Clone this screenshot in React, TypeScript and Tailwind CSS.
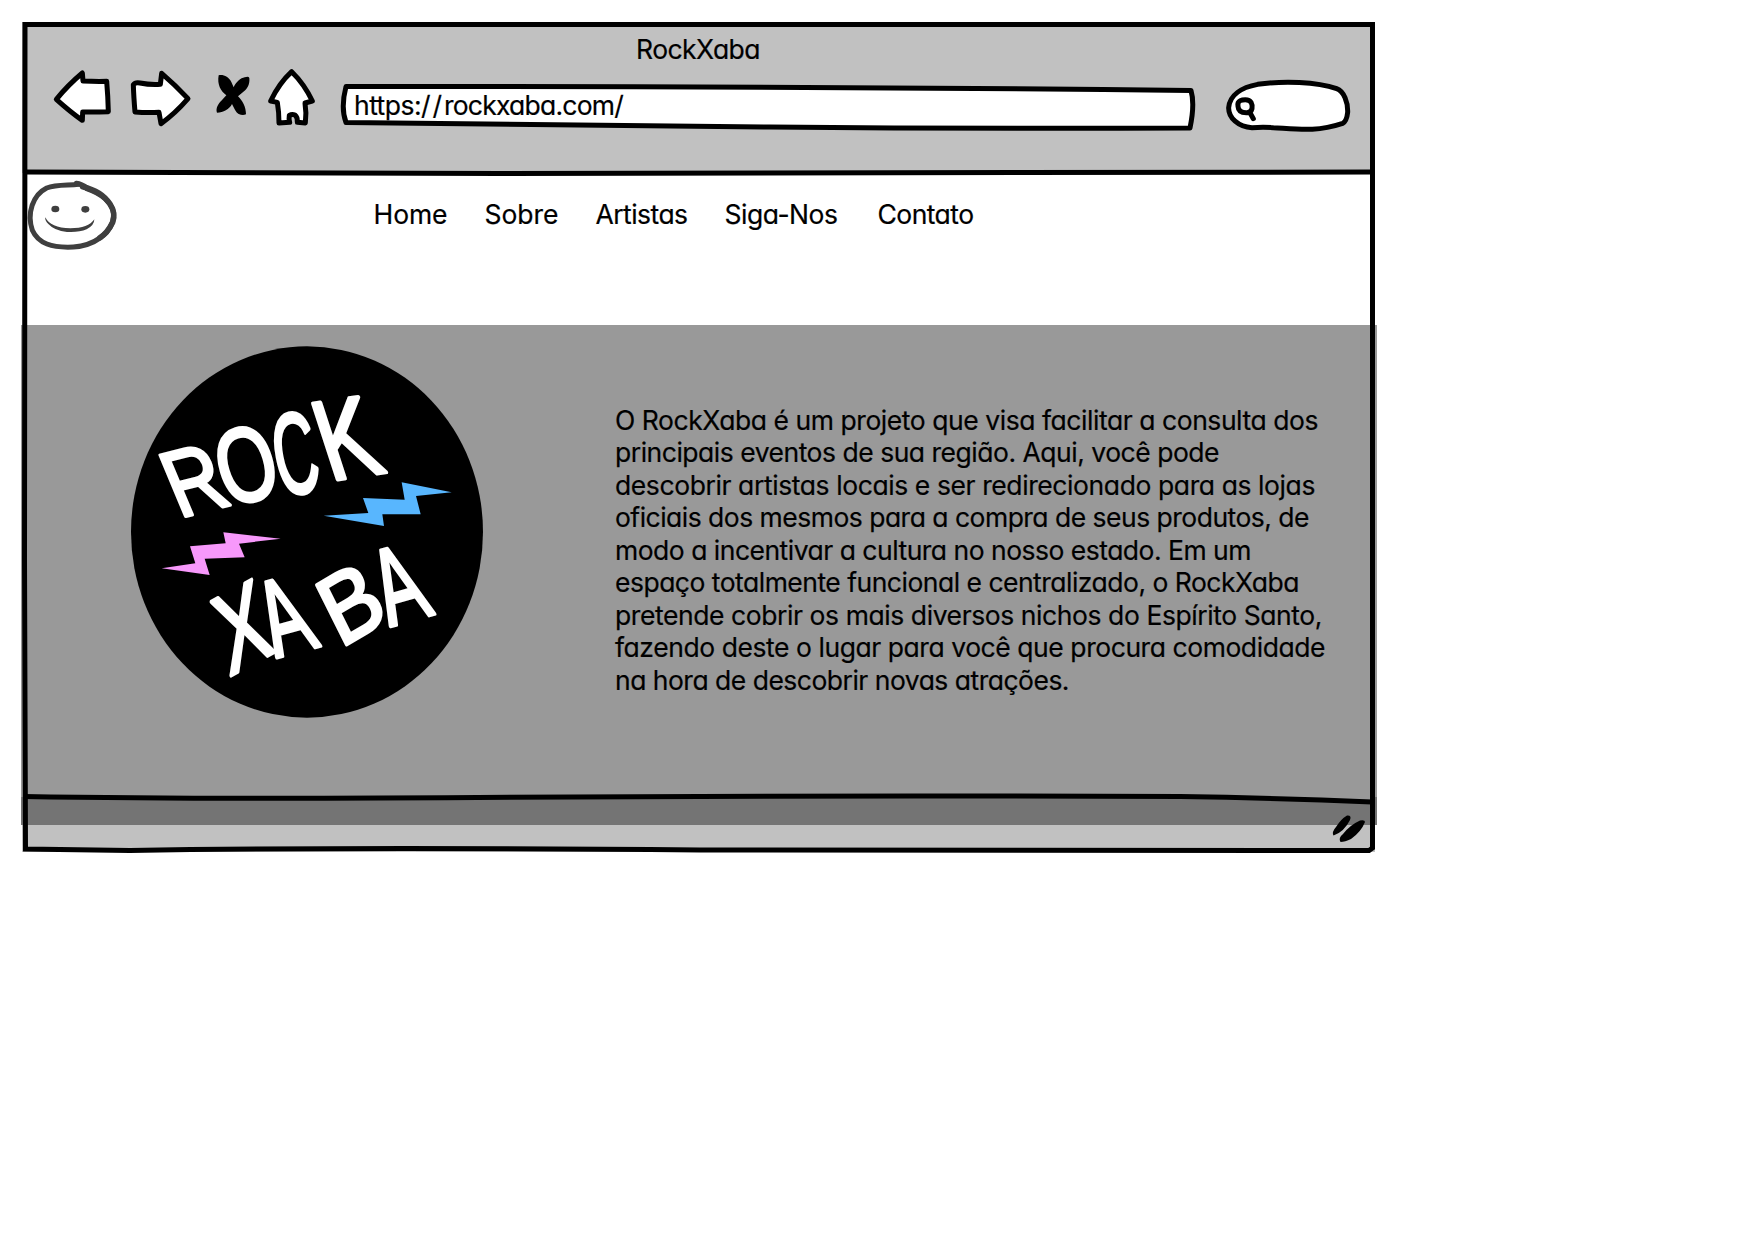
import { useLayoutEffect, useRef, useState } from 'react';

type Point = [number, number];

/* One line of text whose tracking is adjusted so that it fills `width` pixels. */
function FitText({ text, width }: { text: string; width: number }) {
  const ref = useRef<HTMLSpanElement>(null);
  const [spacing, setSpacing] = useState(0);
  useLayoutEffect(() => {
    const el = ref.current;
    if (!el) return;
    el.style.letterSpacing = '0px';
    setSpacing((width - el.getBoundingClientRect().width) / text.length || 0.001);
  }, [text, width]);
  return (
    <span ref={ref} className="inline-block whitespace-pre" style={{ letterSpacing: `${spacing}px` }}>
      {text}
    </span>
  );
}

const LINKS = [
  { label: 'Home', width: 74, gap: 'mr-[37px]' },
  { label: 'Sobre', width: 74, gap: 'mr-[37px]' },
  { label: 'Artistas', width: 92, gap: 'mr-[37px]' },
  { label: 'Siga-Nos', width: 113, gap: 'mr-[40px]' },
  { label: 'Contato', width: 96, gap: '' },
];

const ABOUT = [
  { text: 'O RockXaba é um projeto que visa facilitar a consulta dos', width: 703 },
  { text: 'principais eventos de sua região. Aqui, você pode', width: 604 },
  { text: 'descobrir artistas locais e ser redirecionado para as lojas', width: 700 },
  { text: 'oficiais dos mesmos para a compra de seus produtos, de', width: 694 },
  { text: 'modo a incentivar a cultura no nosso estado. Em um', width: 636 },
  { text: 'espaço totalmente funcional e centralizado, o RockXaba', width: 684 },
  { text: 'pretende cobrir os mais diversos nichos do Espírito Santo,', width: 707 },
  { text: 'fazendo deste o lugar para você que procura comodidade', width: 710 },
  { text: 'na hora de descobrir novas atrações.', width: 454 },
];

/* Letters of the badge: bottom-left, top-left and bottom-right corners of each one. */
const LETTERS: { ch: string; x0: number; x1: number; bl: Point; tl: Point; br: Point }[] = [
  { ch: 'R', x0: 12, x1: 67, bl: [205, 556], tl: [128, 372], br: [330, 524] },
  { ch: 'O', x0: 7, x1: 71, bl: [340, 529], tl: [278, 320], br: [479, 486] },
  { ch: 'C', x0: 7, x1: 66, bl: [497, 500], tl: [452, 266], br: [600, 474] },
  { ch: 'K', x0: 12, x1: 64, bl: [662, 446], tl: [588, 218], br: [796, 426] },
  { ch: 'X', x0: 4, x1: 62, bl: [336, 1034], tl: [272, 814], br: [458, 968] },
  { ch: 'A', x0: 4, x1: 63, bl: [477, 980], tl: [388, 768], br: [596, 948] },
  { ch: 'B', x0: 12, x1: 61, bl: [688, 938], tl: [598, 758], br: [800, 872] },
  { ch: 'A', x0: 4, x1: 63, bl: [818, 886], tl: [732, 674], br: [938, 852] },
];

function Badge() {
  return (
    <svg className="h-[372px] w-[354px]" viewBox="30 47 1062 1116" role="img" aria-label="RockXaba">
      <ellipse cx="561" cy="605" rx="528" ry="557" fill="#000" />
      <path d="M611 556L745 548L729 503L854 508L845 456L995 486L888 497L902 552L787 552L792 587Z" fill="#58b6fe" />
      <path d="M125 714L226 699L210 648L317 639L310 606L482 625L357 640L374 681L254 685L269 734Z" fill="#f798fb" />
      {LETTERS.map(({ ch, x0, x1, bl, tl, br }, i) => {
        const a = (br[0] - bl[0]) / (x1 - x0);
        const b = (br[1] - bl[1]) / (x1 - x0);
        const c = (bl[0] - tl[0]) / 69;
        const d = (bl[1] - tl[1]) / 69;
        return (
          <text
            key={i}
            transform={`matrix(${a} ${b} ${c} ${d} ${bl[0] - a * x0} ${bl[1] - b * x0})`}
            className="font-['Liberation_Sans',sans-serif] text-[100px]"
            fill="#fff"
            stroke="#fff"
            strokeWidth="3.5"
            strokeLinejoin="round"
          >
            {ch}
          </text>
        );
      })}
    </svg>
  );
}

function Toolbar() {
  return (
    <div className="flex h-[72px] items-start pl-[28px]">
      <svg className="mr-[13px] h-[72px] w-[65px]" viewBox="120 162 195 216" fill="#fff" stroke="#000" strokeWidth="15" strokeLinejoin="round">
        <path d="M139 268Q174 225 217 189L219 213Q258 215 290 214Q294 260 295 305Q255 307 218 306L217 331Q180 305 139 268Z" />
      </svg>
      <svg className="mr-[18px] h-[72px] w-[66px]" viewBox="354 162 198 216" fill="#fff" stroke="#000" strokeWidth="15" strokeLinejoin="round">
        <path d="M455 190Q497 226 534 266Q495 311 453 341L447 307Q410 309 375 306Q371 260 370 224Q376 216 390 219Q420 225 451 223Z" />
      </svg>
      <svg className="mr-[10px] h-[72px] w-[42px]" viewBox="606 162 126 216" fill="#000">
        <path d="M626 196C640 193 656 200 664 216L671 232C678 216 692 204 704 202Q716 198 718 204C720 222 712 236 702 244L684 259C698 272 708 292 708 313Q698 317 686 312C678 308 672 294 666 282C658 298 640 308 621 308C616 294 626 280 634 272L649 256C632 244 621 224 626 196Z" />
      </svg>
      <svg className="mr-[19px] h-[72px] w-[55px]" viewBox="762 162 165 216" fill="#fff" stroke="#000" strokeWidth="15" strokeLinejoin="round">
        <path d="M845 185Q883 222 907 273L885 279Q890 310 886 339L862 337Q863 321 855 315Q846 311 838 316Q836 326 839 337L807 339Q807 306 802 277L782 273Q807 220 845 185Z" />
      </svg>
      <div className="relative mr-[24px] h-[72px] w-[862px] pt-[25px] pl-[16px]">
        <svg className="absolute inset-0 h-[72px] w-[862px]" viewBox="338 64 862 72" fill="#fff" stroke="#000" strokeWidth="5" strokeLinejoin="round">
          <path d="M346 86.5Q770 86 1191 90.5Q1195 104 1190 128Q980 129 770 127Q560 124 346 122.5Q340.500 108 346 86.500Z" />
        </svg>
        <div className="relative flex">
          <FitText text="https:" width={67} />
          <FitText text="//" width={23} />
          <FitText text="rockxaba.com/" width={179} />
        </div>
      </div>
      <svg className="h-[72px] w-[130px]" viewBox="222 162 390 216" fill="#fff" stroke="#000" strokeWidth="15" strokeLinecap="round" strokeLinejoin="round">
        <path d="M306 353C265 351 235 323 236 293C239 255 275 232 323 223C400 212 500 215 560 236C582 244 594 277 593 307Q590 335 578 340C500 366 450 358 370 353Q340 350 306 353Z" />
        <path d="M264 289C260 270 279 269 286 269C304 269 308 282 306 296Q303 309 289 308Q265 308 264 289ZM300 308L310 326" />
      </svg>
    </div>
  );
}

function Smiley() {
  return (
    <svg className="h-[76px] w-[96px] shrink-0" viewBox="45 504 288 228" fill="none" stroke="#3f3f3f" strokeLinecap="round" strokeLinejoin="round">
      <path d="M232 537C270 550 311 578 311 615C310 670 250 707 190 711C125 714 85 701 67 661C50 610 68 555 110 534C140 523 175 527 205 523" strokeWidth="15" />
      <path d="M218 530Q275 543 300 582Q318 610 308 637Q292 670 270 683" strokeWidth="17" />
      <path d="M199 520Q215 522 232 535" strokeWidth="15" />
      <g fill="#3f3f3f" stroke="none">
        <ellipse cx="136" cy="597" rx="12" ry="10" />
        <ellipse cx="226" cy="598" rx="12" ry="10" />
        <path d="M106 622Q121 654 181 655Q235 655 253 628Q253 646 230 658Q207 668 171 666Q133 662 115 642Q104 632 106 622Z" />
      </g>
    </svg>
  );
}

/* Uneven ink lines around the window and between its bars. */
function WindowInk() {
  return (
    <svg className="pointer-events-none absolute inset-0 h-[832px] w-[1353px] overflow-visible" viewBox="22 22 1353 832" fill="none" stroke="#000" strokeWidth="5">
      <path d="M1180 796L1372 796V802Q1280 798 1180 796.500Z" fill="#999999" stroke="none" />
      <path d="M25 24.500H1372.500V848L1369 850.500Q1000 851.500 700 850Q350 847 130 850.500L25.500 849Q25 700 24.500 560Q24 300 25 24.500Z" strokeLinejoin="miter" />
      <path d="M24 172Q200 173.500 500 173.500Q900 173 1372 172" />
      <path d="M24 796.500Q180 799 380 798Q780 795 1180 796.500Q1280 798 1372 802" />
      <g fill="#000" stroke="none">
        <path d="M1347 815.500Q1352 815 1350 820Q1344 832 1333.500 835.500Q1331.500 832 1336 827Q1341 819 1347 815.500Z" />
        <path d="M1360 820.500Q1365 819.500 1365 822Q1361 832 1351 839Q1345 842 1340.500 842Q1338 838 1343 834Q1350 825 1360 820.500Z" />
      </g>
    </svg>
  );
}

export default function App() {
  return (
    <div className="h-[1241px] w-[1754px] overflow-hidden bg-white pt-[22px] pl-[22px] font-['Inter',sans-serif] text-[26.5px] leading-[32.45px] text-black [-webkit-text-stroke:0.2px_#000] [font-feature-settings:'cv11','calt'_0]">
      <div className="relative flex h-[832px] w-[1353px] flex-col">
        <header className="h-[151px] shrink-0 bg-[#c1c1c1]">
          <div className="h-[42px] pt-[11px] pl-[614px]">
            <FitText text="RockXaba" width={124} />
          </div>
          <Toolbar />
        </header>
        <nav className="flex h-[152px] shrink-0 items-start bg-white pt-[5px] pl-[3px]">
          <Smiley />
          <div className="mt-[20px] ml-[252.5px] flex">
            {LINKS.map((l) => (
              <a key={l.label} className={l.gap}>
                <FitText text={l.label} width={l.width} />
              </a>
            ))}
          </div>
        </nav>
        <main className="-mx-px flex h-[472px] w-[1356px] shrink-0 items-start bg-[#999999] pt-[21px] pl-[109px]">
          <Badge />
          <p className="mt-[58px] ml-[131px]">
            {ABOUT.map((l) => (
              <span key={l.text} className="block h-[32.45px]">
                <FitText text={l.text} width={l.width} />
              </span>
            ))}
          </p>
        </main>
        <footer className="shrink-0">
          <div className="-mx-px h-[28px] w-[1356px] bg-[#747474]" />
          <div className="h-[27px] bg-[#c1c1c1]" />
        </footer>
        <WindowInk />
      </div>
    </div>
  );
}
